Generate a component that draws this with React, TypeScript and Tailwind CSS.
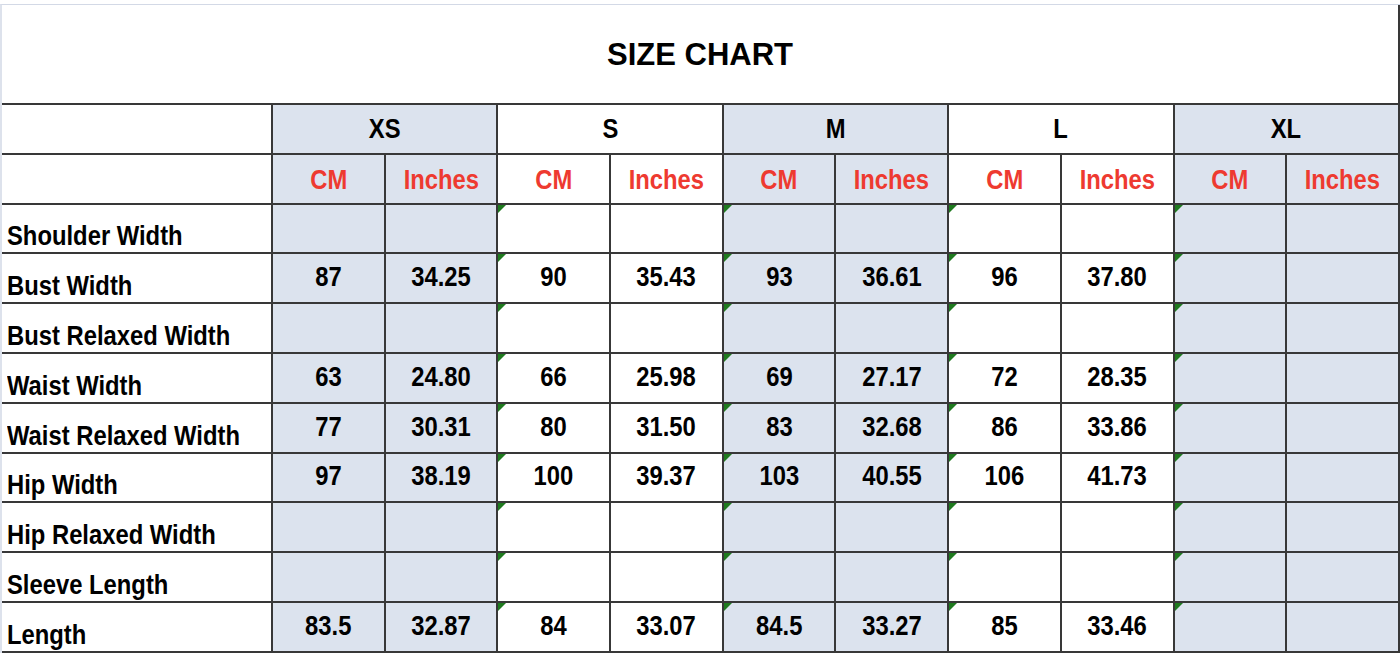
const sizes = ["XS", "S", "M", "L", "XL"];

const rows: [string, string[]][] = [
  ["Shoulder Width", []],
  ["Bust Width", ["87", "34.25", "90", "35.43", "93", "36.61", "96", "37.80"]],
  ["Bust Relaxed Width", []],
  ["Waist Width", ["63", "24.80", "66", "25.98", "69", "27.17", "72", "28.35"]],
  ["Waist Relaxed Width", ["77", "30.31", "80", "31.50", "83", "32.68", "86", "33.86"]],
  ["Hip Width", ["97", "38.19", "100", "39.37", "103", "40.55", "106", "41.73"]],
  ["Hip Relaxed Width", []],
  ["Sleeve Length", []],
  ["Length", ["83.5", "32.87", "84", "33.07", "84.5", "33.27", "85", "33.46"]],
];

const narrow = "font-['Liberation_Sans',Arial,sans-serif] font-bold text-[28px] leading-none whitespace-nowrap";

const isBlue = (sizeIdx: number) => sizeIdx % 2 === 0;

// no narrow face installed, so squeeze the regular one
const Narrow = ({ children, left }: { children: React.ReactNode; left?: boolean }) => (
  <span className={`inline-block scale-x-[0.85] ${left ? "origin-left" : "origin-center"}`}>{children}</span>
);

const Marker = () => (
  <span className="absolute left-0 top-0 w-0 h-0 border-t-[8px] border-t-[#1f7a1f] border-r-[8px] border-r-transparent" />
);

export default function App() {
  return (
    <div className="w-[1400px] h-[658px] bg-white pt-[4px]">
      <div className="border-t border-t-[#d3d9e6] border-l-2 border-l-[#dde2ec] bg-[#383838] pr-[2px] pb-[2px]">
        <div className="h-[98px] bg-white flex items-center justify-center">
          <span className="font-['Liberation_Sans',Arial,sans-serif] font-bold text-[31px] text-black pt-[2px]">
            SIZE CHART
          </span>
        </div>
        <div className="mt-[2px] grid grid-cols-[269px_repeat(10,minmax(0,1fr))] auto-rows-[47.8px] gap-[2px]">
          <div className="bg-white" />
          {sizes.map((s, i) => (
            <div
              key={s}
              className={`col-span-2 flex items-center justify-center ${isBlue(i) ? "bg-[#dce3ee]" : "bg-white"} ${narrow} text-black`}
            >
              <Narrow>{s}</Narrow>
            </div>
          ))}

          <div className="bg-white" />
          {sizes.map((s, i) =>
            ["CM", "Inches"].map((u) => (
              <div
                key={s + u}
                className={`flex items-center justify-center pt-[2px] ${isBlue(i) ? "bg-[#dce3ee]" : "bg-white"} ${narrow} text-[#ee3a30]`}
              >
                <Narrow>{u}</Narrow>
              </div>
            ))
          )}

          {rows.map(([label, vals]) => (
            <div key={label} className="contents">
              <div className={`bg-white flex items-end pl-[5px] pb-[2px] overflow-hidden ${narrow} text-black`}>
                <Narrow left>{label}</Narrow>
              </div>
              {Array.from({ length: 10 }).map((_, c) => {
                const sizeIdx = Math.floor(c / 2);
                const v = vals[c] ?? "";
                return (
                  <div
                    key={c}
                    className={`relative flex items-center justify-center pb-[2px] ${isBlue(sizeIdx) ? "bg-[#dce3ee]" : "bg-white"} ${narrow} text-black`}
                  >
                    {c % 2 === 0 && c > 0 && <Marker />}
                    {v && <Narrow>{v}</Narrow>}
                  </div>
                );
              })}
            </div>
          ))}
        </div>
      </div>
    </div>
  );
}
